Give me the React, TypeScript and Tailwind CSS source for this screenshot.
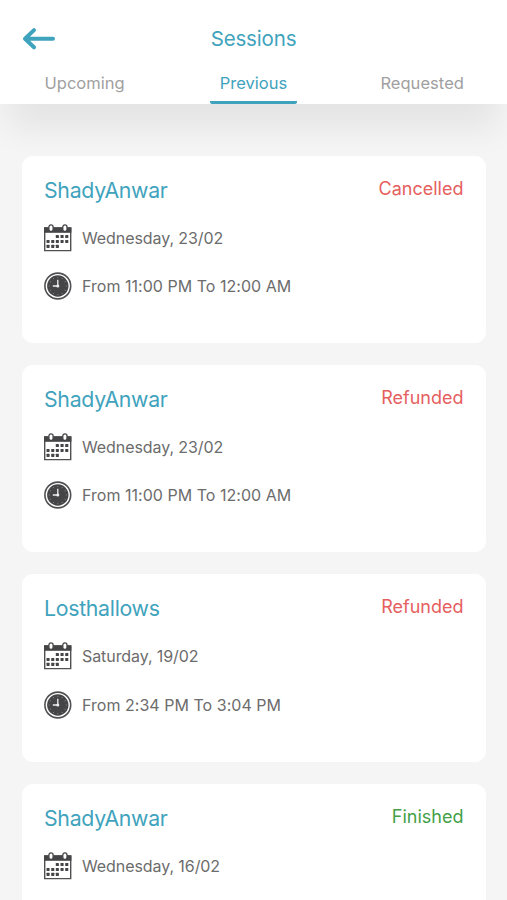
import clsx from 'clsx';

type Status = 'Cancelled' | 'Refunded' | 'Finished';

interface Session {
  id: number;
  name: string;
  date: string;
  time?: string;
  status: Status;
}

const sessions: Session[] = [
  { id: 1, name: 'ShadyAnwar', date: 'Wednesday, 23/02', time: 'From 11:00 PM To 12:00 AM', status: 'Cancelled' },
  { id: 2, name: 'ShadyAnwar', date: 'Wednesday, 23/02', time: 'From 11:00 PM To 12:00 AM', status: 'Refunded' },
  { id: 3, name: 'Losthallows', date: 'Saturday, 19/02', time: 'From 2:34 PM To 3:04 PM', status: 'Refunded' },
  { id: 4, name: 'ShadyAnwar', date: 'Wednesday, 16/02', status: 'Finished' },
];

function BackArrow() {
  return (
    <svg width="34" height="24" viewBox="0 0 34 24" fill="none" stroke="#3fa3bd" strokeWidth="4" strokeLinecap="round" strokeLinejoin="round">
      <path d="M3 11.7H31M12 3.1L3 11.7l9 8.6" />
    </svg>
  );
}

function CalendarIcon() {
  const dots = [
    [13.3, 12.5], [18, 12.5], [22.7, 12.5],
    [4, 17.4], [8.7, 17.4], [13.3, 17.4], [18, 17.4], [22.7, 17.4],
    [4, 22.3], [8.7, 22.3], [13.3, 22.3],
  ];
  return (
    <svg width="28" height="28" viewBox="0 0 28 28" className="shrink-0">
      <path d="M0.7 4H26.7V26.6H0.7Z" fill="#fff" stroke="#505052" strokeWidth="1.4" />
      <path d="M0 3.4H27.4V8.8H0Z" fill="#454547" />
      {[7, 20.9].map((x) => (
        <rect key={x} x={x - 2.1} y="0.9" width="4.2" height="6.6" rx="2.1" fill="#fff" stroke="#454547" strokeWidth="1.3" />
      ))}
      {dots.map(([x, y]) => (
        <rect key={`${x}-${y}`} x={x - 1.5} y={y - 1.5} width="3.1" height="3.1" rx="0.4" fill="#454547" />
      ))}
    </svg>
  );
}

function ClockIcon() {
  return (
    <svg width="28" height="28" viewBox="0 0 28 28" className="shrink-0">
      <circle cx="13.8" cy="14" r="12.9" fill="#fff" stroke="#505052" strokeWidth="1.6" />
      <circle cx="13.8" cy="14" r="10.7" fill="#454547" />
      <g stroke="#8a8a8a" strokeWidth="0.8">
        {[0, 30, 60, 90, 120, 150, 180, 210, 240, 270, 300, 330].map((a) => (
          <path key={a} d="M13.8 4.8v1.2" transform={`rotate(${a} 13.8 14)`} />
        ))}
      </g>
      <path d="M13.8 7.8V14H8.8" fill="none" stroke="#eee" strokeWidth="1.3" />
      <circle cx="13.8" cy="14" r="1.5" fill="#eee" />
    </svg>
  );
}

function SessionCard({ session }: { session: Session }) {
  return (
    <article className="h-[187.3px] shrink-0 rounded-[11px] bg-white px-[22px] pt-[18px]">
      <div className="flex items-start justify-between">
        <h2 className="text-[21.3px] leading-8 tracking-[-0.3px] text-[#3fa3bd]">{session.name}</h2>
        <span
          className={clsx(
            'text-[18px] leading-[30px]',
            session.status === 'Finished' ? 'text-[#43a047]' : 'text-[#e5605e]',
          )}
        >
          {session.status}
        </span>
      </div>
      <div className="mt-[18px] flex h-7 items-center gap-2.5 text-[16px] tracking-[-0.08px] text-[#6c6c6c]">
        <CalendarIcon />
        <span>{session.date}</span>
      </div>
      {session.time && (
        <div className="mt-[20.5px] flex h-7 items-center gap-2.5 text-[16px] tracking-[0.03px] text-[#6c6c6c]">
          <ClockIcon />
          <span>{session.time}</span>
        </div>
      )}
    </article>
  );
}

export default function App() {
  return (
    <div className="flex h-[900px] w-[507px] flex-col overflow-hidden whitespace-nowrap bg-[#f5f5f5] font-['Inter',sans-serif]">
      <header className="h-[104px] shrink-0 bg-white shadow-[0_32px_34px_-8px_rgba(0,0,0,0.07)]">
        <div className="grid h-[72px] grid-cols-[1fr_auto_1fr] items-center px-[22px] pt-[5px]">
          <BackArrow />
          <h1 className="text-[20.5px] leading-8 tracking-[-0.15px] text-[#3fa3bd]">Sessions</h1>
        </div>
        <nav className="flex h-8 justify-between pl-[44.5px] pr-[43px] text-[16.5px] leading-[22px] text-[#a0a0a0]">
          <span>Upcoming</span>
          <span className="ml-[2px] w-[87px] rounded-xs border-b-3 border-[#3fa3bd] text-center text-[#3fa3bd]">Previous</span>
          <span className="tracking-[0.05px]">Requested</span>
        </nav>
      </header>
      <main className="relative mt-[51.7px] flex flex-col gap-[22px] pl-[22px] pr-[21.5px]">
        {sessions.map((session) => (
          <SessionCard key={session.id} session={session} />
        ))}
      </main>
    </div>
  );
}
